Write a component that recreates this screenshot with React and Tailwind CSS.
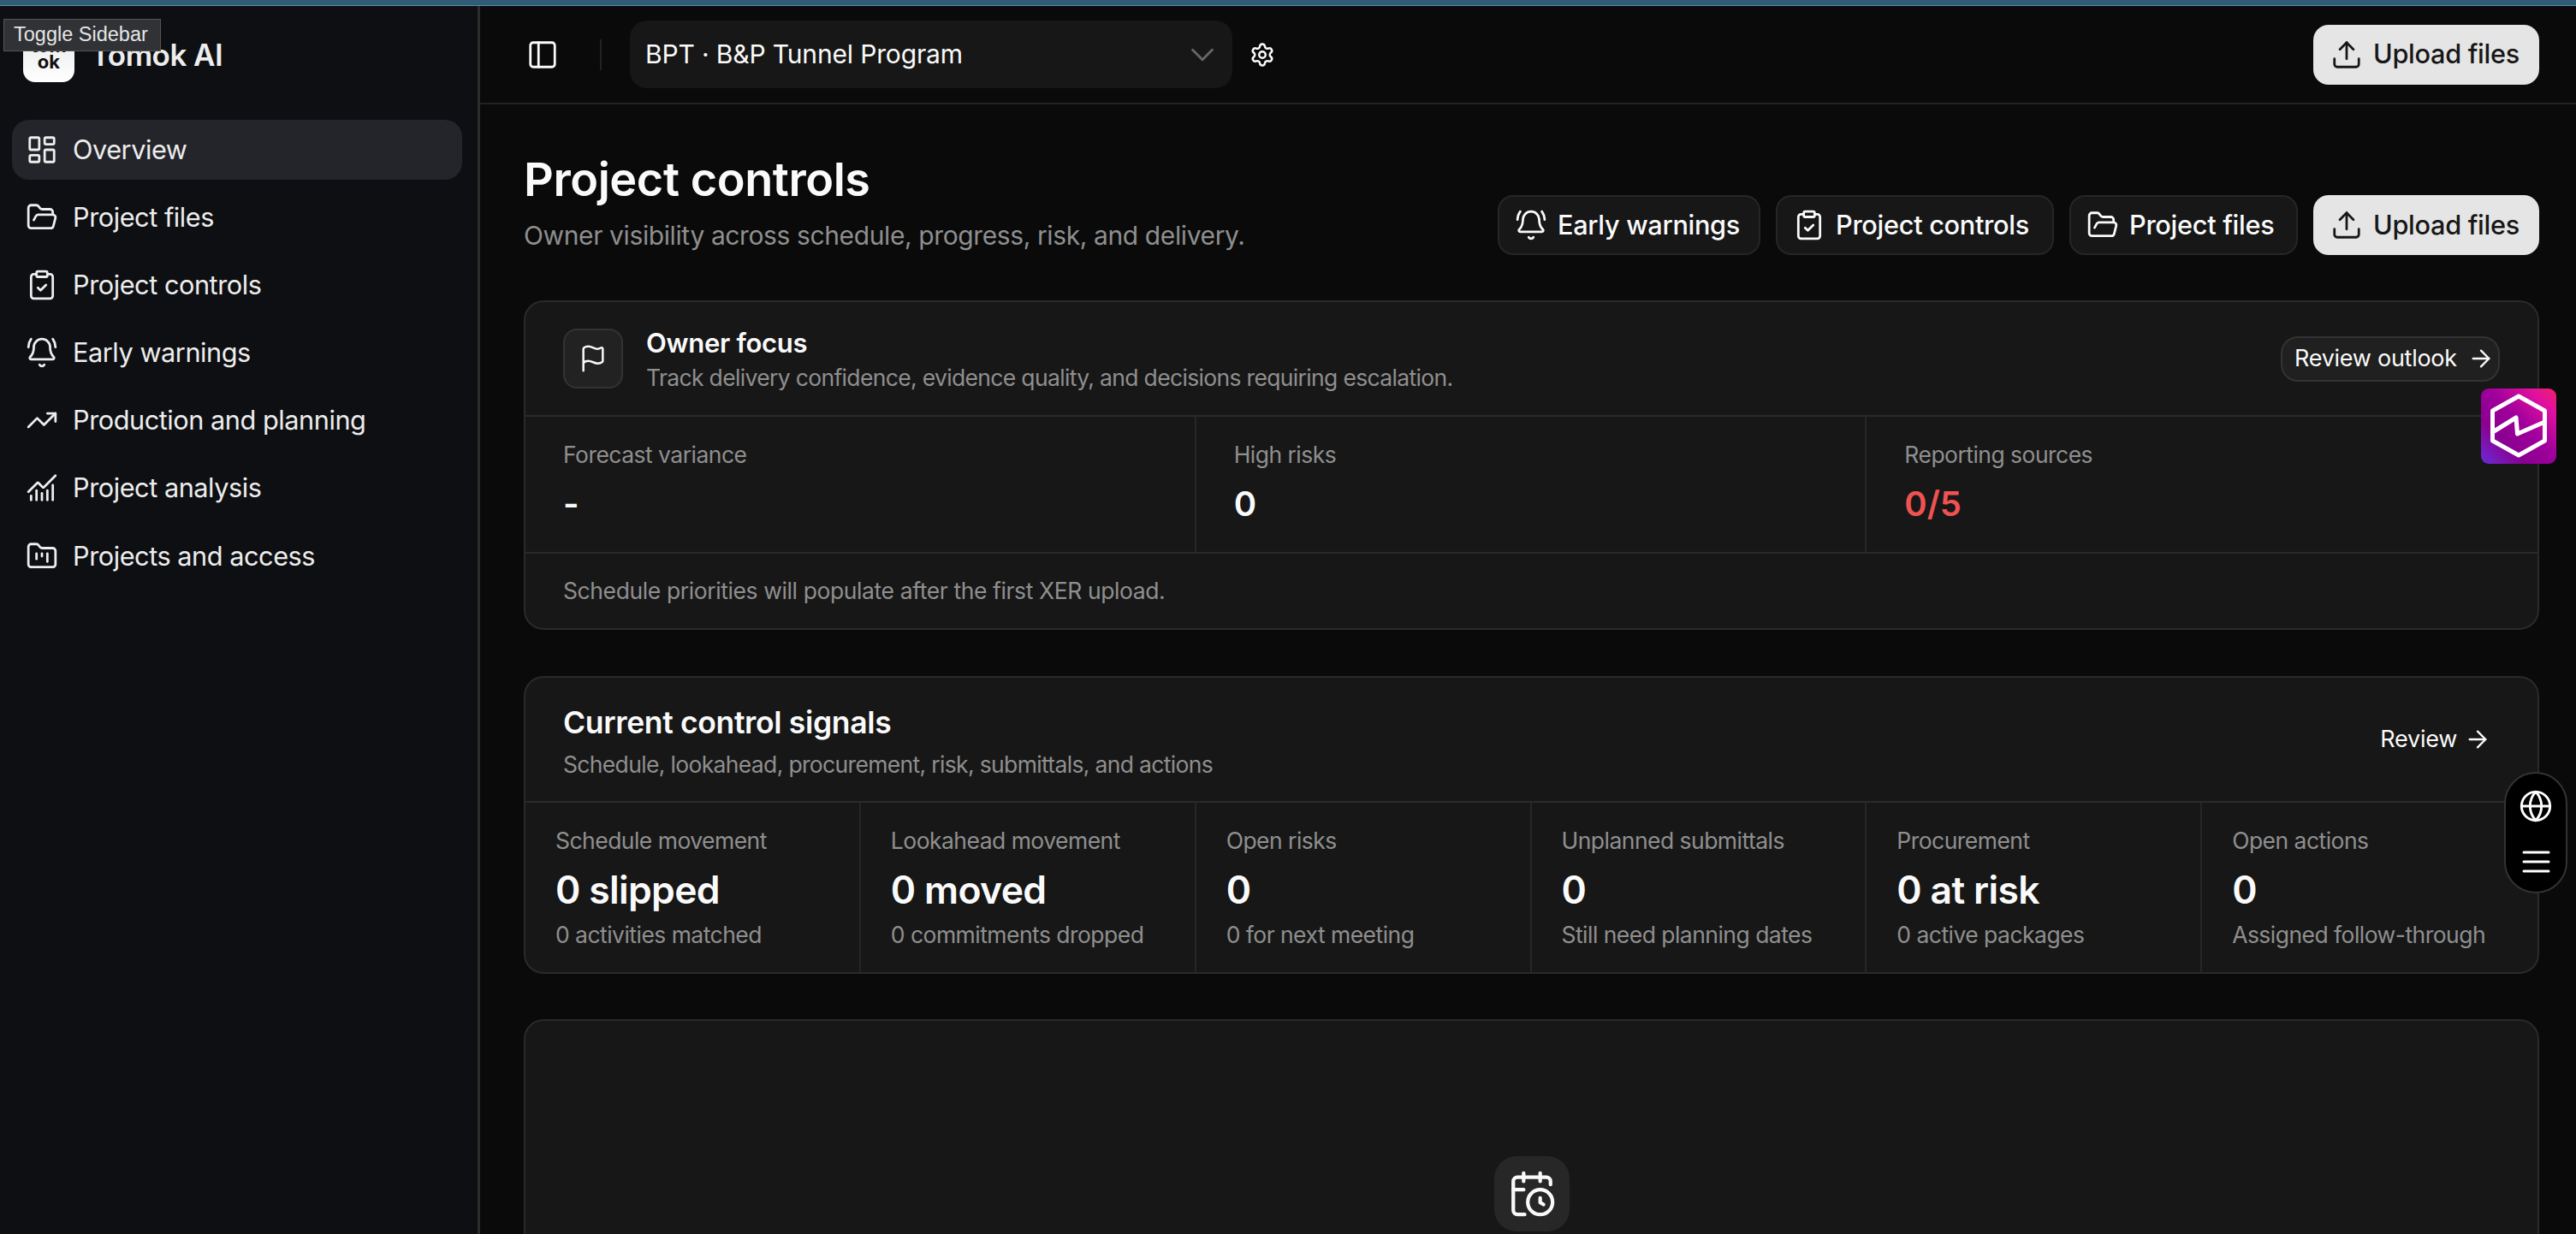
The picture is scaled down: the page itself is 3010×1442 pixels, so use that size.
import React from "react";
import {
  LayoutDashboard, FolderOpen, ClipboardCheck, BellRing, TrendingUp, ChartNoAxesCombined,
  FolderKanban, PanelLeft, ChevronDown, Settings, Upload, Flag, ArrowRight, Globe, CalendarClock,
} from "lucide-react";

const nav = [
  [LayoutDashboard, "Overview", true],
  [FolderOpen, "Project files"],
  [ClipboardCheck, "Project controls"],
  [BellRing, "Early warnings"],
  [TrendingUp, "Production and planning"],
  [ChartNoAxesCombined, "Project analysis"],
  [FolderKanban, "Projects and access"],
];

const signals = [
  ["Schedule movement", "0 slipped", "0 activities matched"],
  ["Lookahead movement", "0 moved", "0 commitments dropped"],
  ["Open risks", "0", "0 for next meeting"],
  ["Unplanned submittals", "0", "Still need planning dates"],
  ["Procurement", "0 at risk", "0 active packages"],
  ["Open actions", "0", "Assigned follow-through"],
];

function UploadButton() {
  return (
    <button className="flex h-[70px] w-[264px] items-center gap-[12px] rounded-[18px] bg-[#e5e5e5] pl-[20px] text-[30.7px] font-medium tracking-[-0.01em] text-[#171717]">
      <Upload size={38} strokeWidth={1.75} />
      Upload files
    </button>
  );
}

function GhostButton({ icon: Icon, label, width }) {
  return (
    <button
      className="flex h-[70px] items-center gap-[12px] rounded-[18px] border-2 border-[#262626] bg-[#171717] pl-[18px] text-[30.7px] font-medium tracking-[-0.01em] text-[#fafafa]"
      style={{ width }}
    >
      <Icon size={38} strokeWidth={1.75} />
      {label}
    </button>
  );
}

export default function App() {
  return (
    <div className="relative flex h-[1442px] w-[3010px] flex-col overflow-hidden bg-[#0a0a0a] font-[Inter,sans-serif]">
      <div className="h-[7px] shrink-0 border-b border-[#5d8ba1] bg-[#2f5d75]" />
      <div className="flex min-h-0 flex-1">
        <aside className="w-[561px] shrink-0 border-r-[3px] border-[#2c2c2c] bg-[#0e0f12]">
          <div className="flex h-[133px] items-start gap-[19px] pl-[27px] pt-[29px]">
            <div className="flex h-[60px] w-[60px] shrink-0 flex-col items-center justify-start rounded-[14px] bg-gradient-to-b from-[#e8e8e8] to-white pt-[8px] text-[22px] font-bold leading-[19px] text-[#111]">
              <span>tom</span>
              <span>ok</span>
            </div>
            <span className="mt-[6px] text-[35px] font-semibold leading-[44px] tracking-[-0.015em] text-[#ededed]">Tomok AI</span>
          </div>
          <nav className="flex flex-col gap-[9.1px] pl-[14px] pr-[18px]">
            {nav.map(([Icon, label, active]) => (
              <div
                key={label}
                className={`flex h-[70px] items-center gap-[17px] rounded-[20px] pl-[16px] text-[30.7px] tracking-[-0.015em] text-[#ededed] ${active ? "bg-[#24252a]" : ""}`}
              >
                <Icon size={38} strokeWidth={1.75} className="shrink-0" />
                {label}
              </div>
            ))}
          </nav>
        </aside>

        <main className="min-w-0 flex-1">
          <header className="flex h-[115px] items-center border-b-2 border-[#222] pl-[54px] pr-[43px] text-[#fafafa]">
            <PanelLeft size={38} strokeWidth={1.75} />
            <div className="ml-[48px] mr-[33px] h-[36px] w-[2px] bg-[#222]" />
            <div className="flex h-[79px] w-[704px] items-center justify-between rounded-[20px] bg-[#171717] pl-[18px] pr-[12px] text-[30px] tracking-[-0.005em]">
              BPT · B&amp;P Tunnel Program
              <ChevronDown size={46} strokeWidth={1.5} className="text-[#666]" />
            </div>
            <Settings size={30} strokeWidth={2} className="ml-[20px]" />
            <div className="ml-auto">
              <UploadButton />
            </div>
          </header>

          <div className="pl-[51px] pr-[43px] pt-[58px]">
            <div className="flex items-end justify-between">
              <div>
                <h1 className="text-[54px] font-semibold leading-[60px] tracking-[-0.008em] text-[#fafafa]">Project controls</h1>
                <p className="mb-[2px] mt-[14px] text-[30px] leading-[42px] tracking-[-0.013em] text-[#8f8f8f]">Owner visibility across schedule, progress, risk, and delivery.</p>
              </div>
              <div className="flex gap-[18px]">
                <GhostButton icon={BellRing} label="Early warnings" width={307} />
                <GhostButton icon={ClipboardCheck} label="Project controls" width={325} />
                <GhostButton icon={FolderOpen} label="Project files" width={267} />
                <UploadButton />
              </div>
            </div>

            <section className="mt-[53px] rounded-[23px] border-2 border-[#2a2a2a] bg-[#171717]">
              <div className="flex h-[134px] items-center border-b-2 border-[#2a2a2a] pl-[44px] pr-[44px]">
                <div className="flex h-[70px] w-[70px] items-center justify-center rounded-[16px] border-2 border-[#333] bg-[#222] text-[#fafafa]">
                  <Flag size={34} strokeWidth={1.75} />
                </div>
                <div className="ml-[27px] pt-[3px]">
                  <div className="text-[31px] font-semibold leading-[40px] tracking-[-0.01em] text-[#fafafa]">Owner focus</div>
                  <div className="text-[26.5px] leading-[40px] tracking-[-0.025em] text-[#8f8f8f]">Track delivery confidence, evidence quality, and decisions requiring escalation.</div>
                </div>
                <button className="ml-auto flex h-[53px] w-[256px] items-center gap-[12px] rounded-[20px] border-2 border-[#333] bg-[#202020] pl-[14px] text-[27px] font-normal tracking-[-0.01em] text-[#fafafa]">
                  Review outlook
                  <ArrowRight size={32} strokeWidth={1.75} className="shrink-0" />
                </button>
              </div>
              <div className="grid h-[160px] grid-cols-3 border-b-2 border-[#2a2a2a]">
                {[
                  ["Forecast variance", "-", "text-[#fafafa]"],
                  ["High risks", "0", "text-[#fafafa]"],
                  ["Reporting sources", "0/5", "text-[#f05252]"],
                ].map(([label, value, color], i) => (
                  <div key={label} className={`pl-[44px] pt-[26px] ${i < 2 ? "border-r-2 border-[#262626]" : ""}`}>
                    <div className="text-[26.5px] leading-[36px] tracking-[-0.02em] text-[#8f8f8f]">{label}</div>
                    <div className={`mt-[15px] text-[40px] font-semibold leading-[50px] ${color}`}>{value}</div>
                  </div>
                ))}
              </div>
              <div className="flex h-[87px] items-center pl-[44px] text-[26.5px] tracking-[-0.015em] text-[#8f8f8f]">
                Schedule priorities will populate after the first XER upload.
              </div>
            </section>

            <section className="mt-[54px] rounded-[23px] border-2 border-[#2a2a2a] bg-[#171717]">
              <div className="flex h-[146px] items-center border-b-2 border-[#2a2a2a] pl-[44px] pr-[54px]">
                <div className="pt-[5px]">
                  <div className="text-[35.5px] font-semibold leading-[48px] tracking-[-0.01em] text-[#fafafa]">Current control signals</div>
                  <div className="mt-[4px] text-[26.5px] leading-[40px] tracking-[-0.025em] text-[#8f8f8f]">Schedule, lookahead, procurement, risk, submittals, and actions</div>
                </div>
                <button className="ml-auto flex items-center gap-[8px] text-[27px] font-normal tracking-[-0.01em] text-[#fafafa]">
                  Review
                  <ArrowRight size={32} strokeWidth={1.75} />
                </button>
              </div>
              <div className="grid h-[198px] grid-cols-6">
                {signals.map(([label, value, sub], i) => (
                  <div key={label} className={`pl-[35px] pt-[26px] ${i < 5 ? "border-r-2 border-[#262626]" : ""}`}>
                    <div className="text-[26.5px] leading-[36px] tracking-[-0.02em] text-[#8f8f8f]">{label}</div>
                    <div className="mt-[12px] text-[44.5px] font-semibold leading-[56px] tracking-[-0.015em] text-[#fafafa]">{value}</div>
                    <div className="mt-[6px] text-[26.5px] leading-[36px] tracking-[-0.02em] text-[#8f8f8f]">{sub}</div>
                  </div>
                ))}
              </div>
            </section>

            <section className="mt-[53px] h-[400px] rounded-[23px] border-2 border-[#2a2a2a] bg-[#171717] pt-[158px]">
              <div className="mx-auto flex h-[88px] w-[88px] items-center justify-center rounded-[26px] bg-[#272727] text-[#fafafa]">
                <CalendarClock size={58} strokeWidth={1.75} />
              </div>
            </section>
          </div>
        </main>
      </div>

      <div className="absolute left-[4px] top-[22px] flex h-[38px] w-[184px] items-center border border-[#555] bg-[#303236] pl-[11px] font-['Liberation_Sans',sans-serif] text-[23.5px] text-[#e5e5e5]">
        Toggle Sidebar
      </div>

      <div className="absolute left-[2899px] top-[454px] h-[88px] w-[88px] overflow-hidden rounded-[9px] bg-[linear-gradient(45deg,#6a2cd8_0%,#8a0090_30%,#a0009c_55%,#e010a0_82%,#f0206a_100%)]">
        <svg viewBox="0 0 88 88" className="h-full w-full" fill="none" stroke="white" strokeWidth="5" strokeLinejoin="round" strokeLinecap="round">
          <path d="M44 9 L74.5 26 V61 L44 78 L13.5 61 V26 Z" />
          <path d="M13.5 51 L41 34 L42.5 53 L74.5 39" />
        </svg>
      </div>

      <div className="absolute left-[2926px] top-[902px] flex h-[142px] w-[74px] flex-col items-center rounded-full border-2 border-[#333] bg-black pt-[18px] text-white">
        <Globe size={40} strokeWidth={1.75} />
        <svg viewBox="0 0 33 26" className="mt-[32px] h-[26px] w-[33px]" stroke="white" strokeWidth="3" strokeLinecap="round">
          <path d="M2 2H31M2 13H31M2 24H31" />
        </svg>
      </div>
    </div>
  );
}
